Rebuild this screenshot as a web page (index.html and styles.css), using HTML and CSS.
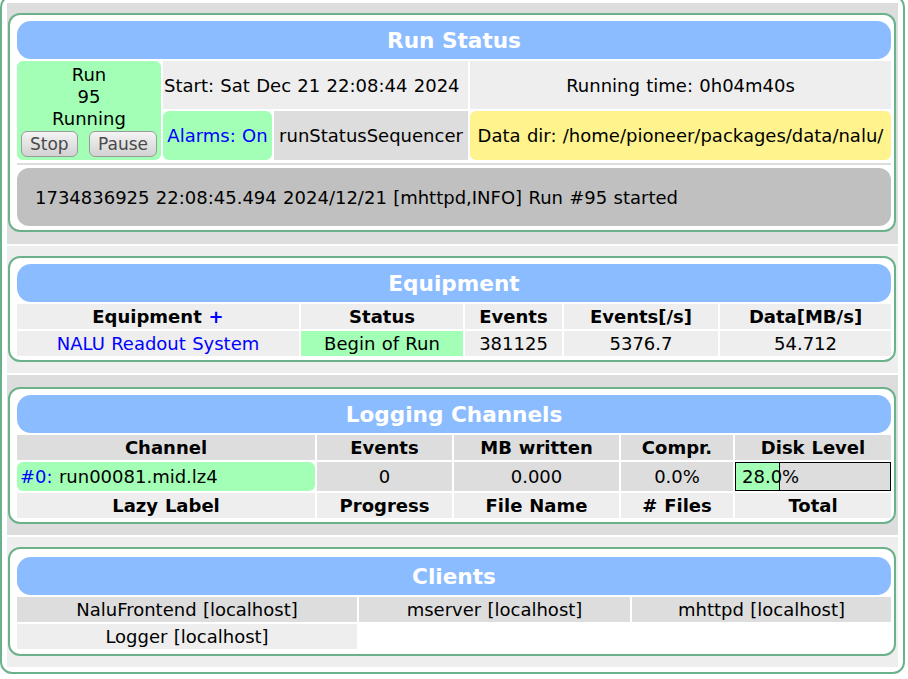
FILE: index.html
```html
<!DOCTYPE html>
<html>
<head>
<meta charset="utf-8">
<title>MIDAS Status</title>
<link rel="stylesheet" href="styles.css">
</head>
<body>
<div class="page">

  <div class="band band-dark band-run">
    <div class="mbox">
      <table class="mtable">
        <colgroup><col class="rs-c1"><col class="rs-c2"><col class="rs-c3"><col class="rs-c4"></colgroup>
        <tr><th colspan="4" class="title">Run Status</th></tr>
        <tr class="rs-row1">
          <td rowspan="2" class="run-cell">
            <div class="run-line">Run</div>
            <div class="run-line">95</div>
            <div class="run-line">Running</div>
            <div class="run-buttons">
              <button class="mbutton">Stop</button>
              <button class="mbutton">Pause</button>
            </div>
          </td>
          <td colspan="2" class="cell-light left">Start: Sat Dec 21 22:08:44 2024</td>
          <td class="cell-light">Running time: 0h04m40s</td>
        </tr>
        <tr class="rs-row2">
          <td class="cell-green rounded link">Alarms: On</td>
          <td class="cell-dark">runStatusSequencer</td>
          <td class="cell-yellow rounded">Data dir: /home/pioneer/packages/data/nalu/</td>
        </tr>
        <tr><td colspan="4" class="sep"><div class="sep-line"></div></td></tr>
        <tr><td colspan="4" class="msg">1734836925 22:08:45.494 2024/12/21 [mhttpd,INFO] Run #95 started</td></tr>
      </table>
    </div>
  </div>

  <div class="band band-light">
    <div class="mbox">
      <table class="mtable">
        <colgroup><col class="eq-c1"><col class="eq-c2"><col class="eq-c3"><col class="eq-c4"><col class="eq-c5"></colgroup>
        <tr><th colspan="5" class="title">Equipment</th></tr>
        <tr>
          <th class="cell-light">Equipment <span class="link">+</span></th>
          <th class="cell-light">Status</th>
          <th class="cell-light">Events</th>
          <th class="cell-light">Events[/s]</th>
          <th class="cell-light">Data[MB/s]</th>
        </tr>
        <tr>
          <td class="cell-light link">NALU Readout System</td>
          <td class="cell-green">Begin of Run</td>
          <td class="cell-light">381125</td>
          <td class="cell-light">5376.7</td>
          <td class="cell-light">54.712</td>
        </tr>
      </table>
    </div>
  </div>

  <div class="band band-dark band-logging">
    <div class="mbox">
      <table class="mtable">
        <colgroup><col class="lg-c1"><col class="lg-c2"><col class="lg-c3"><col class="lg-c4"><col class="lg-c5"></colgroup>
        <tr><th colspan="5" class="title">Logging Channels</th></tr>
        <tr>
          <th class="cell-dark">Channel</th>
          <th class="cell-dark">Events</th>
          <th class="cell-dark">MB written</th>
          <th class="cell-dark">Compr.</th>
          <th class="cell-dark">Disk Level</th>
        </tr>
        <tr class="lg-data">
          <td class="cell-green rounded left channel"><span class="link">#0:</span> run00081.mid.lz4</td>
          <td class="cell-dark">0</td>
          <td class="cell-dark">0.000</td>
          <td class="cell-dark">0.0%</td>
          <td class="disk">
            <div class="bar">
              <div class="bar-fill" style="width: 28%"></div>
              <span class="bar-text">28.0%</span>
            </div>
          </td>
        </tr>
        <tr>
          <th class="cell-light">Lazy Label</th>
          <th class="cell-light">Progress</th>
          <th class="cell-light">File Name</th>
          <th class="cell-light"># Files</th>
          <th class="cell-light">Total</th>
        </tr>
      </table>
    </div>
  </div>

  <div class="band band-light">
    <div class="mbox mbox-clients">
      <table class="mtable">
        <colgroup><col class="cl-c1"><col class="cl-c2"><col class="cl-c3"></colgroup>
        <tr><th colspan="3" class="title">Clients</th></tr>
        <tr>
          <td class="cell-dark">NaluFrontend [localhost]</td>
          <td class="cell-dark">mserver [localhost]</td>
          <td class="cell-dark">mhttpd [localhost]</td>
        </tr>
        <tr>
          <td class="cell-light">Logger [localhost]</td>
          <td></td>
          <td></td>
        </tr>
      </table>
    </div>
  </div>

</div>
</body>
</html>
```

FILE: styles.css
```css
html, body {
  margin: 0;
  padding: 0;
  background: #ffffff;
}

body {
  font-family: "DejaVu Sans", Verdana, sans-serif;
  font-size: 18px;
  word-spacing: 0.6px;
  color: #000000;
  overflow: hidden;
}

.page {
  margin: -5px 3px 0 0;
  border: 2px solid #6bb28c;
  border-radius: 12px;
  padding: 6px 5px 5px 5px;
  display: flex;
  flex-direction: column;
  gap: 2px;
  background: #ffffff;
}

.band {
  padding: 10px 2px 11px 1px;
}

.band-dark {
  background: #dddddd;
}

.band-light {
  background: #eeeeee;
}

.band-run {
  padding-bottom: 12px;
}

.band-logging {
  padding-top: 12px;
  padding-bottom: 11px;
}

.mbox {
  border: 2px solid #6bb28c;
  border-radius: 12px;
  background: #ffffff;
  padding: 4px 1px 2px 5px;
}

.mbox-clients {
  padding-top: 6px;
  padding-bottom: 3px;
}

.mtable {
  width: 100%;
  border-collapse: separate;
  border-spacing: 2px;
  table-layout: fixed;
}

.mtable td,
.mtable th {
  padding: 2px 1px;
  line-height: 21px;
  text-align: center;
  vertical-align: middle;
  white-space: nowrap;
  overflow: hidden;
}

.mtable th {
  font-weight: bold;
}

.mtable th.title {
  background: #8bbcff;
  color: #ffffff;
  font-size: 21.6px;
  word-spacing: 0;
  line-height: 36px;
  padding: 2px 0 0 0;
  border-radius: 14px;
}

/* column widths */
.rs-c1 { width: 144px; }
.rs-c2 { width: 109px; }
.rs-c3 { width: 194px; }
.rs-c4 { width: 421px; }

.eq-c1 { width: 282px; }
.eq-c2 { width: 162px; }
.eq-c3 { width: 97px; }
.eq-c4 { width: 154px; }
.eq-c5 { width: 171px; }

.lg-c1 { width: 298px; }
.lg-c2 { width: 135px; }
.lg-c3 { width: 165px; }
.lg-c4 { width: 112px; }
.lg-c5 { width: 156px; }

.cl-c1 { width: 340px; }
.cl-c2 { width: 271px; }
.cl-c3 { width: 259px; }

/* cell colours */
.cell-light { background: #eeeeee; }
.cell-dark { background: #dddddd; }
.cell-green { background: #a3ffb6; }
.cell-yellow { background: #fff38d; }
.rounded { border-radius: 6px; }
.left { text-align: left !important; }
.link { color: #0000ff; }

/* run status */
.rs-row1 td {
  height: 48px;
  padding-top: 0;
  padding-bottom: 0;
}

.rs-row2 td {
  height: 49px;
  padding-top: 0;
  padding-bottom: 0;
}

.mtable td.run-cell {
  background: #a3ffb6;
  border-radius: 6px;
  vertical-align: top;
  padding: 3px 0 0 0;
}

.run-line {
  line-height: 22px;
  text-align: center;
}

.run-buttons {
  display: flex;
  justify-content: space-between;
  padding: 0 4px;
  margin-top: 1px;
}

.mbutton {
  font-family: "DejaVu Sans", Verdana, sans-serif;
  font-size: 17px;
  color: #4a4a4a;
  height: 26px;
  line-height: 24px;
  padding: 0 8px;
  border: 1px solid #9a9a9a;
  border-radius: 6px;
  background: linear-gradient(#f4f4f4, #d2d2d2);
}

.mtable td.sep {
  height: 4px;
  padding: 0;
  line-height: 0;
}

.sep-line {
  height: 2px;
  margin: 1px 0;
  background: #dddddd;
}

.mtable td.msg {
  height: 58px;
  padding: 0 0 0 18px;
  background: #c0c0c0;
  border-radius: 12px;
  text-align: left;
}

/* logging */
.mtable td.channel {
  padding-left: 3px;
}

.lg-data td {
  height: 29px;
  padding-top: 0;
  padding-bottom: 0;
}

.mtable td.disk {
  padding: 0;
}

.bar {
  position: relative;
  height: 27px;
  line-height: 27px;
  border: 1px solid #000000;
  background: #dddddd;
  text-align: left;
}

.bar-fill {
  position: absolute;
  left: 0;
  top: 0;
  bottom: 0;
  background: #a3ffb6;
  border-right: 1px solid #000000;
}

.bar-text {
  position: relative;
  padding-left: 6px;
}
```
